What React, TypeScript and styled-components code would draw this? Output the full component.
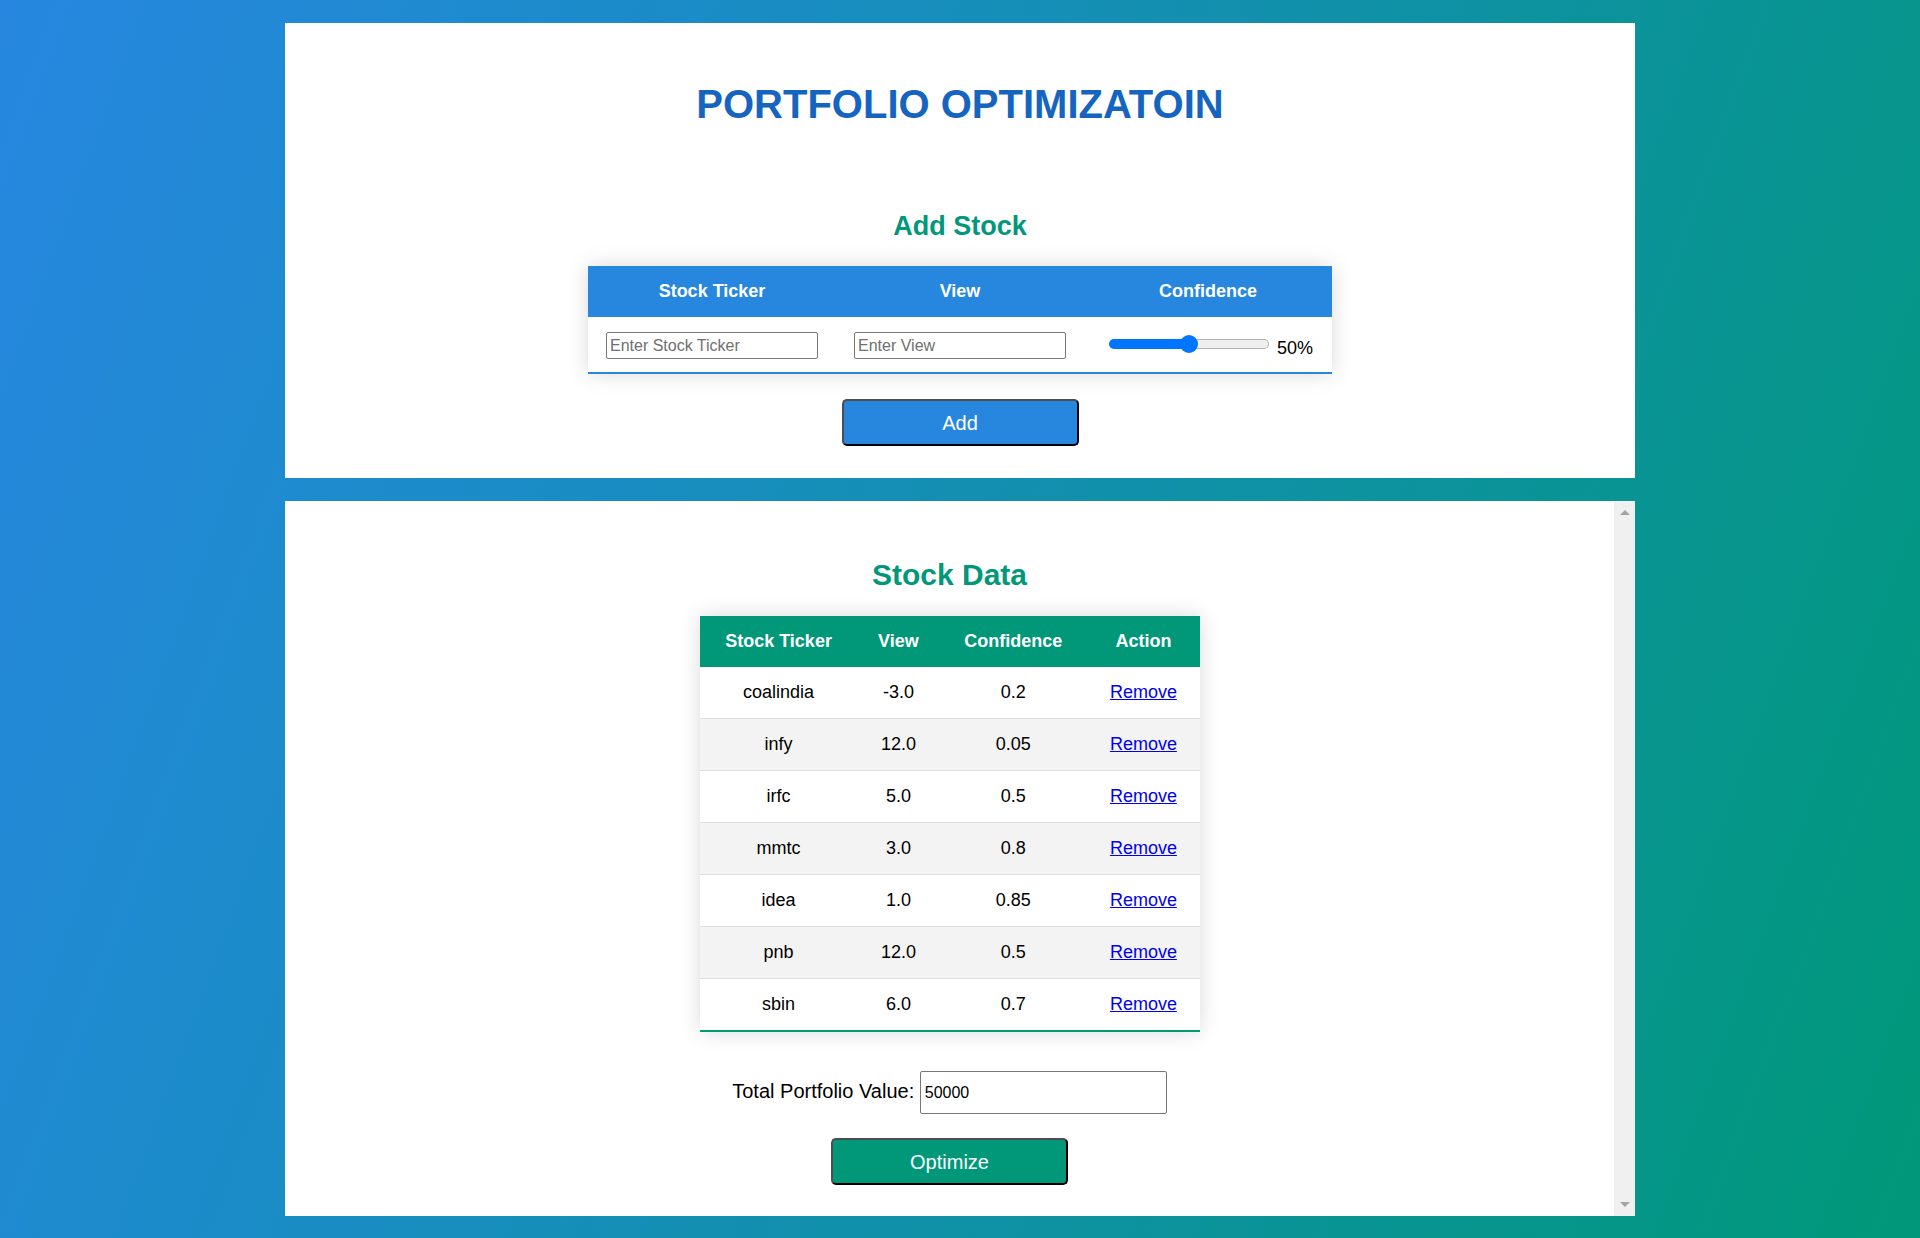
import * as React from "react";
import styled, { createGlobalStyle } from "styled-components";

const BLUE = "#2787de";
const GREEN = "#009879";

const GlobalStyle = createGlobalStyle`
  html, body {
    margin: 0;
    padding: 0;
  }
  body {
    font-family: "Liberation Sans", Arial, sans-serif;
    background: linear-gradient(110deg, #2787e0 0%, #1a8cc6 30%, #009879 100%);
    min-height: 1238px;
  }
`;

const Page = styled.div`
  display: flex;
  flex-direction: column;
  align-items: center;
  gap: 23px;
  padding: 23px 0 22px;
`;

const TopCard = styled.section`
  width: 1350px;
  height: 455px;
  background: #ffffff;
  display: flex;
  flex-direction: column;
  align-items: center;
`;

const BottomCard = styled.section`
  width: 1350px;
  height: 715px;
  background: #ffffff;
  display: flex;
`;

const CardBody = styled.div`
  flex: 1;
  display: flex;
  flex-direction: column;
  align-items: center;
`;

const Title = styled.h1`
  margin: 58px 0 0;
  font-size: 40px;
  line-height: 46px;
  font-weight: bold;
  color: #1565c0;
`;

const SubTitle = styled.h2<{ $size: number; $top: number }>`
  margin: ${(p) => p.$top}px 0 24px;
  font-size: ${(p) => p.$size}px;
  line-height: ${(p) => Math.round(p.$size * 1.15)}px;
  font-weight: bold;
  color: ${GREEN};
`;

const Table = styled.table<{ $width: number; $accent: string; $fixed?: boolean }>`
  width: ${(p) => p.$width}px;
  border-collapse: collapse;
  table-layout: ${(p) => (p.$fixed ? "fixed" : "auto")};
  box-shadow: 0 0 20px rgba(0, 0, 0, 0.15);
  font-size: 18px;
  line-height: 21px;
  color: #000;

  thead tr {
    background: ${(p) => p.$accent};
  }
  tbody tr {
    border-bottom: 1px solid #dddddd;
  }
  tbody tr:nth-of-type(even) {
    background: #f3f3f3;
  }
  tbody tr:last-of-type {
    border-bottom: 2px solid ${(p) => p.$accent};
  }
`;

const Th = styled.th`
  padding: 15px;
  color: #ffffff;
  font-weight: bold;
  text-align: center;
`;

const Td = styled.td`
  padding: 15px;
  text-align: center;
`;

const InputTd = styled.td`
  padding: 15px 18px 13px;
`;

const TextInput = styled.input`
  display: block;
  box-sizing: border-box;
  width: 100%;
  height: 27px;
  padding: 0 3px;
  border: 1px solid #767676;
  border-radius: 2px;
  font-family: "Liberation Sans", Arial, sans-serif;
  font-size: 16px;
  color: #000;

  &::placeholder {
    color: #707070;
  }
`;

const SliderWrap = styled.div`
  display: flex;
  align-items: flex-end;
  height: 27px;
  padding-left: 7px;
`;

const Slider = styled.input<{ $fill: number }>`
  -webkit-appearance: none;
  appearance: none;
  align-self: flex-start;
  width: 160px;
  height: 20px;
  margin: 2px 0 0;
  background: transparent;

  &::-webkit-slider-runnable-track {
    box-sizing: border-box;
    height: 10px;
    border: 1px solid transparent;
    border-radius: 5px;
    background:
      linear-gradient(to right, #0075ff ${(p) => p.$fill}%, transparent ${(p) => p.$fill}%) border-box,
      linear-gradient(#efefef, #efefef) padding-box,
      linear-gradient(#b2b2b2, #b2b2b2) border-box;
  }
  &::-webkit-slider-thumb {
    -webkit-appearance: none;
    width: 18px;
    height: 18px;
    margin-top: -5px;
    border: none;
    border-radius: 50%;
    background: #0075ff;
  }
`;

const SliderValue = styled.span`
  margin-left: 8px;
  font-size: 18px;
  line-height: 21px;
`;

const Button = styled.button<{ $color: string; $top: number }>`
  width: 237px;
  height: 47px;
  margin-top: ${(p) => p.$top}px;
  padding: 2px 0 0;
  background: ${(p) => p.$color};
  color: #ffffff;
  font-family: "Liberation Sans", Arial, sans-serif;
  font-size: 20px;
  border: 2px solid;
  border-color: #4d4d4d #000 #000 #4d4d4d;
  border-radius: 5px;
  cursor: pointer;
`;

const RemoveLink = styled.a`
  color: #0000ee;
  text-decoration: underline;
`;

const TotalRow = styled.div`
  margin-top: 39px;
  font-size: 20px;
  color: #000;
`;

const TotalInput = styled.input`
  box-sizing: border-box;
  width: 247px;
  height: 43px;
  padding: 0 4px;
  border: 1px solid #767676;
  border-radius: 2px;
  font-family: "Liberation Sans", Arial, sans-serif;
  font-size: 16px;
  color: #000;
  vertical-align: baseline;
`;

const Scrollbar = styled.div`
  width: 21px;
  box-sizing: border-box;
  padding: 9px 0;
  background: #f0f0f0;
  display: flex;
  flex-direction: column;
  justify-content: space-between;
  align-items: center;
`;

const Arrow = styled.div<{ $down?: boolean }>`
  width: 0;
  height: 0;
  border-left: 5px solid transparent;
  border-right: 5px solid transparent;
  ${(p) => (p.$down ? "border-top" : "border-bottom")}: 5px solid #a3a3a3;
`;

type Stock = { ticker: string; view: string; confidence: string };

const stocks: Stock[] = [
  { ticker: "coalindia", view: "-3.0", confidence: "0.2" },
  { ticker: "infy", view: "12.0", confidence: "0.05" },
  { ticker: "irfc", view: "5.0", confidence: "0.5" },
  { ticker: "mmtc", view: "3.0", confidence: "0.8" },
  { ticker: "idea", view: "1.0", confidence: "0.85" },
  { ticker: "pnb", view: "12.0", confidence: "0.5" },
  { ticker: "sbin", view: "6.0", confidence: "0.7" },
];

const App: React.FC = () => {
  const [confidence, setConfidence] = React.useState(50);
  const [total, setTotal] = React.useState("50000");

  return (
    <>
      <GlobalStyle />
      <Page>
        <TopCard>
          <Title>PORTFOLIO OPTIMIZATOIN</Title>
          <SubTitle $size={27} $top={84}>Add Stock</SubTitle>
          <Table $width={744} $accent={BLUE} $fixed>
            <thead>
              <tr>
                <Th>Stock Ticker</Th>
                <Th>View</Th>
                <Th>Confidence</Th>
              </tr>
            </thead>
            <tbody>
              <tr>
                <InputTd>
                  <TextInput type="text" placeholder="Enter Stock Ticker" />
                </InputTd>
                <InputTd>
                  <TextInput type="text" placeholder="Enter View" />
                </InputTd>
                <InputTd>
                  <SliderWrap>
                    <Slider
                      type="range"
                      min={0}
                      max={100}
                      value={confidence}
                      $fill={confidence}
                      onChange={(e) => setConfidence(Number(e.target.value))}
                    />
                    <SliderValue>{confidence}%</SliderValue>
                  </SliderWrap>
                </InputTd>
              </tr>
            </tbody>
          </Table>
          <Button $color={BLUE} $top={25}>Add</Button>
        </TopCard>

        <BottomCard>
          <CardBody>
            <SubTitle $size={30} $top={56}>Stock Data</SubTitle>
            <Table $width={500} $accent={GREEN}>
              <thead>
                <tr>
                  <Th>Stock Ticker</Th>
                  <Th>View</Th>
                  <Th>Confidence</Th>
                  <Th>Action</Th>
                </tr>
              </thead>
              <tbody>
                {stocks.map((s) => (
                  <tr key={s.ticker}>
                    <Td>{s.ticker}</Td>
                    <Td>{s.view}</Td>
                    <Td>{s.confidence}</Td>
                    <Td>
                      <RemoveLink href="#" onClick={(e) => e.preventDefault()}>Remove</RemoveLink>
                    </Td>
                  </tr>
                ))}
              </tbody>
            </Table>
            <TotalRow>
              Total Portfolio Value: <TotalInput type="text" value={total} onChange={(e) => setTotal(e.target.value)} />
            </TotalRow>
            <Button $color={GREEN} $top={24}>Optimize</Button>
          </CardBody>
          <Scrollbar>
            <Arrow />
            <Arrow $down />
          </Scrollbar>
        </BottomCard>
      </Page>
    </>
  );
};

export default App;
